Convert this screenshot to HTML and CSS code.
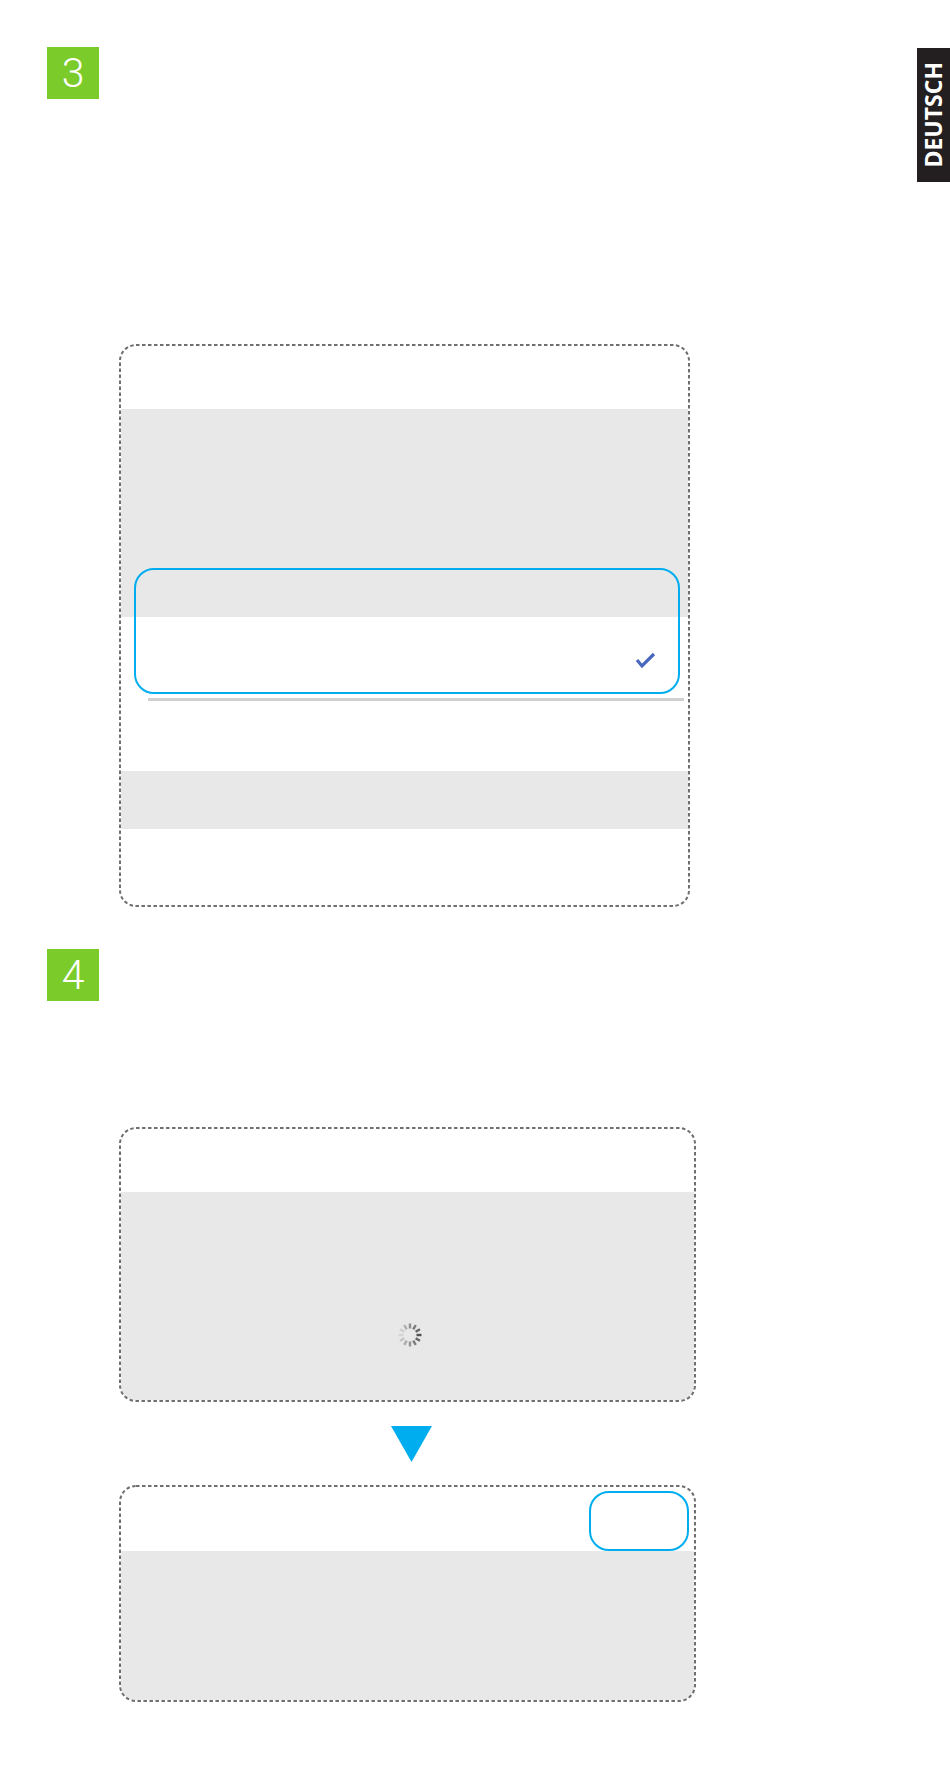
FILE: index.html
```html
<!DOCTYPE html>
<html lang="de">

<head>
    <meta charset="UTF-8">
    <meta name="viewport" content="width=device-width, initial-scale=1.0">
    <title>Schritt 3 und 4</title>
    <link rel="stylesheet" href="styles.css">
</head>

<body>
    <div class="page">
        <div class="lang-tab"><span>DEUTSCH</span></div>

        <!-- step 3: pick an entry from the list -->
        <section class="step">
            <div class="step-badge">3</div>
            <div class="screen screen-list">
                <div class="screen-header"></div>
                <div class="band band-tall"></div>
                <div class="list-gap">
                    <div class="divider"></div>
                </div>
                <div class="band band-short"></div>
                <div class="list-foot"></div>

                <div class="selected-item">
                    <svg class="check" width="21" height="18" viewBox="0 0 21 18">
                        <polyline points="2,8 7,14 19,2" fill="none" stroke="#4a67bf" stroke-width="3.2" />
                    </svg>
                </div>
                <svg class="frame-line"><rect /></svg>
            </div>
        </section>

        <!-- step 4: wait, then confirm -->
        <section class="step step-four">
            <div class="step-badge">4</div>
            <div class="screen screen-wide screen-loading">
                <div class="screen-header"></div>
                <div class="band band-bottom band-loading">
                    <svg class="spinner" width="26" height="26" viewBox="-13 -13 26 26">
                        <g stroke="#3a3a3a" stroke-width="2.4">
                            <line x1="0" y1="-6.5" x2="0" y2="-11.5" opacity="0.5" />
                            <line x1="0" y1="-6.5" x2="0" y2="-11.5" opacity="0.62" transform="rotate(30)" />
                            <line x1="0" y1="-6.5" x2="0" y2="-11.5" opacity="0.75" transform="rotate(60)" />
                            <line x1="0" y1="-6.5" x2="0" y2="-11.5" opacity="0.85" transform="rotate(90)" />
                            <line x1="0" y1="-6.5" x2="0" y2="-11.5" opacity="0.75" transform="rotate(120)" />
                            <line x1="0" y1="-6.5" x2="0" y2="-11.5" opacity="0.62" transform="rotate(150)" />
                            <line x1="0" y1="-6.5" x2="0" y2="-11.5" opacity="0.48" transform="rotate(180)" />
                            <line x1="0" y1="-6.5" x2="0" y2="-11.5" opacity="0.34" transform="rotate(210)" />
                            <line x1="0" y1="-6.5" x2="0" y2="-11.5" opacity="0.2" transform="rotate(240)" />
                            <line x1="0" y1="-6.5" x2="0" y2="-11.5" opacity="0.1" transform="rotate(270)" />
                            <line x1="0" y1="-6.5" x2="0" y2="-11.5" opacity="0.14" transform="rotate(300)" />
                            <line x1="0" y1="-6.5" x2="0" y2="-11.5" opacity="0.32" transform="rotate(330)" />
                        </g>
                    </svg>
                </div>
                <svg class="frame-line"><rect /></svg>
            </div>

            <div class="arrow">
                <svg width="41" height="36" viewBox="0 0 41 36">
                    <polygon points="0,0 41,0 20.5,36" fill="#00aeef" />
                </svg>
            </div>

            <div class="screen screen-wide screen-done">
                <div class="screen-header header-action">
                    <div class="action-button"></div>
                </div>
                <div class="band band-bottom band-done"></div>
                <svg class="frame-line"><rect /></svg>
            </div>
        </section>
    </div>
</body>

</html>
```

FILE: styles.css
```css
body {
    margin: 0;
    padding: 0;
    background: #ffffff;
    font-family: Roboto, "Liberation Sans", Arial, sans-serif;
}

.page {
    position: relative;
    width: 950px;
    padding: 47px 0 0 47px;
    box-sizing: border-box;
}

.lang-tab {
    position: absolute;
    top: 48px;
    right: 0;
    width: 33px;
    height: 134px;
    background-color: #231f20;
    display: flex;
    align-items: center;
    justify-content: center;
}

.lang-tab span {
    writing-mode: vertical-rl;
    transform: rotate(180deg);
    color: #ffffff;
    font-family: "Open Sans", "Liberation Sans", sans-serif;
    font-weight: 700;
    font-size: 23px;
    line-height: 1;
}

.step-badge {
    width: 52px;
    height: 52px;
    background-color: #7bcb2a;
    color: #ffffff;
    font-size: 41px;
    font-weight: 300;
    line-height: 52px;
    text-align: center;
}

.step-four {
    margin-top: 42px;
}

/* phone screen outline, dashes drawn by the svg overlay */
.screen {
    position: relative;
    width: 571px;
    margin-left: 72px;
    padding: 2px;
    border-radius: 16px;
    box-sizing: border-box;
    background: #ffffff;
}

.frame-line {
    position: absolute;
    top: 0;
    left: 0;
    width: 100%;
    height: 100%;
    overflow: visible;
    pointer-events: none;
}

.frame-line rect {
    x: 1px;
    y: 1px;
    width: calc(100% - 2px);
    height: calc(100% - 2px);
    rx: 16px;
    fill: none;
    stroke: #6f6f6f;
    stroke-width: 2px;
    stroke-dasharray: 3.5px 2.5px;
}

.screen-list {
    margin-top: 245px;
    height: 563px;
}

.screen-wide {
    width: 577px;
}

.screen-loading {
    margin-top: 126px;
    height: 275px;
}

.screen-done {
    margin-top: 23px;
    height: 217px;
}

.screen-header {
    height: 63px;
}

.band {
    background-color: #e8e8e8;
}

.band-bottom {
    border-radius: 0 0 14px 14px;
}

.band-tall {
    height: 208px;
}

.band-short {
    height: 58px;
}

.list-gap {
    height: 154px;
    overflow: hidden;
}

.divider {
    height: 3px;
    margin: 81px 4px 0 27px;
    background-color: #d0d0d0;
}

.selected-item {
    position: absolute;
    left: 15px;
    top: 224px;
    width: 546px;
    height: 126px;
    border: 2px solid #00aeef;
    border-radius: 20px;
    box-sizing: border-box;
    display: flex;
    align-items: flex-end;
    justify-content: flex-end;
    padding: 0 22px 22px 0;
}

.band-loading {
    height: 208px;
    display: flex;
    justify-content: center;
    padding-top: 130px;
    box-sizing: border-box;
}

.spinner {
    display: block;
    margin-left: 4px;
}

.arrow {
    margin: 24px 0 0 344px;
    height: 36px;
}

.arrow svg {
    display: block;
}

.header-action {
    height: 64px;
    display: flex;
    justify-content: flex-end;
    padding: 4px 5px 0 0;
    box-sizing: border-box;
}

.action-button {
    width: 100px;
    height: 60px;
    border: 2px solid #00aeef;
    border-radius: 20px;
    box-sizing: border-box;
}

.band-done {
    height: 149px;
}
```
